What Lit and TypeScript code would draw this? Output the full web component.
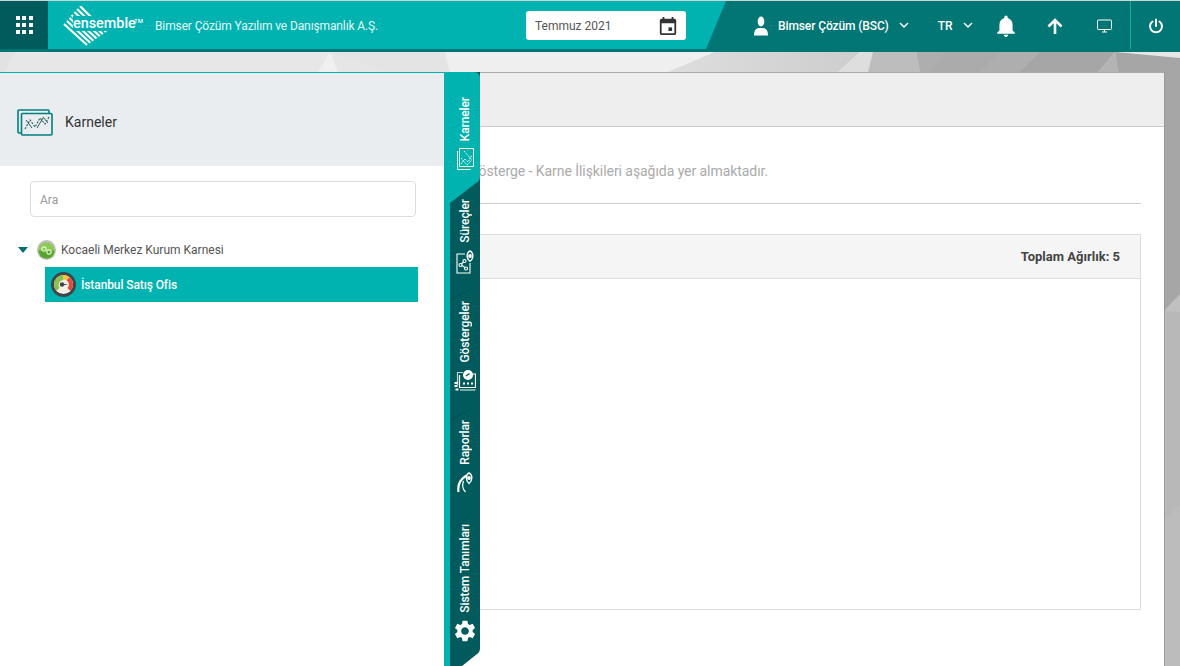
import { LitElement, html, css, svg } from "lit";
import { customElement } from "lit/decorators.js";

const GEAR = "M19.14 12.94c.04-.3.06-.61.06-.94 0-.32-.02-.64-.07-.94l2.03-1.58a.49.49 0 0 0 .12-.61l-1.92-3.32a.488.488 0 0 0-.59-.22l-2.39.96c-.5-.38-1.03-.7-1.62-.94l-.36-2.54a.484.484 0 0 0-.48-.41h-3.84c-.24 0-.43.17-.47.41l-.36 2.54c-.59.24-1.13.57-1.62.94l-2.39-.96c-.22-.08-.47 0-.59.22L2.74 8.87c-.12.21-.08.47.12.61l2.03 1.58c-.05.3-.09.63-.09.94s.02.64.07.94l-2.03 1.58a.49.49 0 0 0-.12.61l1.92 3.32c.12.22.37.29.59.22l2.39-.96c.5.38 1.03.7 1.62.94l.36 2.54c.05.24.24.41.48.41h3.84c.24 0 .44-.17.47-.41l.36-2.54c.59-.24 1.13-.56 1.62-.94l2.39.96c.22.08.47 0 .59-.22l1.92-3.32c.12-.22.07-.47-.12-.61l-2.01-1.58zM12 15.6c-1.98 0-3.6-1.62-3.6-3.6s1.62-3.6 3.6-3.6 3.6 1.62 3.6 3.6-1.62 3.6-3.6 3.6z";

const tabs = [
  {
    label: "Karneler",
    icon: html`<svg class="ti" width="17" height="22" viewBox="0 0 17 22" fill="none" stroke="#fff" stroke-width="1">
      <path d="M2.500 .5h14v18h-14z"/><path d="M.5 3v18.500h13"/>
      <path d="M4 16l4-5 3 3 4-7M4 10l6 7M7 3l8 9M10 17l5-5" stroke-width="1" stroke-dasharray="1.500 .8"/>
    </svg>`,
  },
  {
    label: "Süreçler",
    icon: html`<svg class="ti" width="19" height="24" viewBox="0 0 19 24" fill="none" stroke="#fff" stroke-width="1.100">
      <path d="M9 4H1v19h13V13"/>
      <circle cx="4.500" cy="15" r="1.500"/><circle cx="8.500" cy="11" r="1.500"/><circle cx="10" cy="18.500" r="1.500"/>
      <path d="M5.500 14l2-2M6 15.500l3 2"/>
      <path d="M14 .8c-3.800 2-3.800 7.700 0 10.400 3.800-2.700 3.800-8.400 0-10.400z" stroke-width="1.400"/>
      <circle cx="14" cy="6" r="1.900" fill="#fff" stroke="none"/>
    </svg>`,
  },
  {
    label: "Göstergeler",
    icon: html`<svg class="ti" width="22" height="21" viewBox="0 0 22 21" fill="none" stroke="#fff" stroke-width="1.200">
      <path d="M5.500 5v12.500h16V4H18"/><path d="M3.500 15V2.500H9" opacity=".75"/>
      <circle cx="14" cy="5" r="5" fill="#fff" stroke="none"/>
      <path d="M12 6l3.500-2.500" stroke="#015a5b" stroke-width="1.400"/>
      <path d="M9 13.500h2M13 13.500h2M17 13.500h2" stroke-width="1.800"/>
      <path d="M.5 13h3M.5 16h3M1.500 19.500h3" stroke-width="1.800"/>
      <path d="M6 20h15.500" opacity=".8"/>
    </svg>`,
  },
  {
    label: "Raporlar",
    icon: html`<svg class="ti" width="17" height="21" viewBox="0 0 17 21" fill="none" stroke="#fff">
      <path d="M1.500 20C.5 13 3.500 7 9.500 3.500" stroke-width="2.200"/>
      <path d="M6.500 9C5 13 5.500 17 8.500 20" stroke-width="1.200"/>
      <path d="M12 .8C8.500 3 8.500 8.500 12 11.500 15.800 8.500 15.800 3 12 .8z" stroke-width="1.400"/>
      <circle cx="12" cy="6" r="1.900" fill="#fff" stroke="none"/>
    </svg>`,
  },
  {
    label: "Sistem Tanımları",
    icon: html`<svg class="ti" width="22" height="22" viewBox="1.700 1.700 20.600 20.600" fill="#fff"><path d=${GEAR}/></svg>`,
  },
];

const polys: [string, string][] = [
  ["0,52 14,52 6,72 0,72", "#e2e2e2"],
  ["14,52 330,52 318,72 6,72", "#e7e7e7"],
  ["330,52 318,72 338,72", "#f0f0f0"],
  ["330,52 445,52 450,72 385,72", "#e4e4e4"],
  ["445,52 715,52 668,72 450,72", "#efefef"],
  ["715,52 860,52 838,72 668,72", "url(#g1)"],
  ["860,52 873,52 868,72 838,72", "#dedede"],
  ["873,52 916,52 920,72 868,72", "#bdbdbd"],
  ["916,52 1115,52 1098,72 920,72", "#aeaeae"],
  ["945,52 1000,52 980,72 930,72", "#ababab"],
  ["1040,52 1115,52 1098,72 1020,72", "#a6a6a6"],
  ["1115,52 1098,72 1118,72", "#b4b4b4"],
  ["1115,52 1180,58 1180,666 1164,666 1164,72 1118,72", "#a6a6a6"],
  ["1164,311 1180,294 1180,666 1164,666", "#b8b8b8"],
  ["1164,311 1180,294 1180,312", "#c0c0c0"],
  ["1164,520 1180,505 1180,666 1164,666", "#bcbcbc"],
];

@customElement("app-root")
export class AppRoot extends LitElement {
  static styles = css`
    :host { display: block; height: 100vh; }
    * { box-sizing: border-box; }
    .root { position: relative; height: 100vh; overflow: hidden; font-family: Roboto, "Liberation Sans", sans-serif; display: flex; flex-direction: column; background: #e6e6e6; }
    .bg { position: absolute; inset: 0; }

    header { position: relative; flex: none; height: 52px; border-top: 1px solid #c9d6d6; border-bottom: 3px solid #027675; background: #027675; display: flex; color: #fff; }
    .left { width: 726px; background: #00b3b1; clip-path: polygon(0 0, 100% 0, 706px 100%, 0 100%); display: flex; align-items: center; }
    .apps { width: 48px; height: 48px; background: #015a5b; display: grid; grid-template-columns: repeat(3, 4px); grid-auto-rows: 4px; gap: 3px 2.500px; place-content: center; }
    .apps i { background: #fff; display: block; }
    .logo { position: relative; width: 92px; height: 48px; margin-left: 15px; flex: none; }
    .logo svg { position: absolute; left: 0; top: 5px; }
    .logo b { position: absolute; left: 10px; top: 15px; height: 15px; background: #00b3b1; font: 500 14.400px/15px Roboto, sans-serif; }
    .logo sup { position: absolute; left: 71px; top: 17px; font: 500 6px/6px Roboto, sans-serif; }
    .company { margin-top: 2px; font-size: 12px; letter-spacing: -.12px; color: #e6f7f7; white-space: nowrap; width: 371px; }
    .date { margin-top: 1px; width: 160px; height: 29px; background: #fff; border-radius: 3px; color: #555; font-size: 12px; display: flex; align-items: center; justify-content: space-between; padding: 0 8px 0 9px; }
    .right { flex: 1; display: flex; align-items: center; padding-top: 1px; font-size: 12px; font-weight: 500; white-space: nowrap; }
    .user { margin-left: 28px; }
    .uname { margin-left: 10px; letter-spacing: -.1px; }
    .chev { margin-left: 10px; }
    .tr { margin-left: 29px; }
    .bell { margin-left: 22px; }
    .up { margin-left: 30px; }
    .mon { margin-left: 34px; }
    .sep { margin-left: 18px; width: 1px; height: 48px; margin-top: -1px; background: #0fa9a6; }
    .pow { margin-left: 17px; }

    .stage { position: relative; flex: 1; min-height: 0; padding: 20px 16px 0 0; }
    .panel { height: 640px; background: #fff; border-top: 1px solid #aaa; box-shadow: 1px 0 0 #999; }
    .phead { height: 54px; background: #eee; border-bottom: 1px solid #ccc; }
    .pbody { padding: 34px 23px 0 24px; }
    .note { margin: 0; padding: 0 0 22px 445px; font-size: 14px; letter-spacing: -.06px; line-height: 20px; color: #aaa; border-bottom: 1px solid #ccc; }
    .card { margin-top: 30px; height: 376px; border: 1px solid #ddd; }
    .chead { height: 44px; background: #f5f5f5; border-bottom: 1px solid #ddd; display: flex; align-items: center; justify-content: flex-end; padding-right: 20px; font-size: 13px; font-weight: 700; color: #444; }

    .drawer { position: absolute; left: 0; top: 72px; bottom: 0; width: 444px; background: #fff; border-top: 1px solid #00b3b1; }
    .dhead { height: 93px; background: #e9edf0; display: flex; align-items: center; padding: 5px 0 0 17px; gap: 12px; font-size: 14px; color: #333; }
    .search { display: block; margin: 15px 28px 0 30px; height: 36px; border: 1px solid #ddd; border-radius: 4px; padding: 0 9px; font: 12px/36px Roboto, sans-serif; color: #999; }
    .node { display: flex; align-items: center; height: 22px; margin-top: 22px; padding-left: 18px; font-size: 12px; color: #555; }
    .caret { width: 0; height: 0; border-left: 5px solid transparent; border-right: 5px solid transparent; border-top: 6px solid #00706f; }
    .node svg { margin: 0 5px 0 9px; }
    .sel { display: flex; align-items: center; height: 35px; margin: 6px 26px 0 45px; padding-left: 6px; gap: 5px; background: #00b3b1; color: #fff; font-size: 12px; font-weight: 500; letter-spacing: -.1px; }

    .rail { position: absolute; left: 444px; top: 72px; width: 36px; height: 594px; color: #fff; display: flex; flex-direction: column; padding-left: 6px; }
    .rail > svg { position: absolute; left: 0; top: 0; }
    .tab { position: relative; display: flex; flex-direction: column; align-items: center; gap: 7px; padding-top: 11px; }
    .tab span { writing-mode: vertical-rl; transform: rotate(180deg); font-size: 12px; letter-spacing: -.1px; font-weight: 500; line-height: 14px; white-space: nowrap; }
    .t0 { height: 118px; padding-top: 25px; }
    .t1 { height: 100px; padding-top: 9px; }
    .t2 { height: 119px; }
    .t3 { height: 104px; }
    .t4 { height: 153px; }
  `;

  render() {
    return html`<div class="root">
      <svg class="bg" width="1180" height="666" viewBox="0 0 1180 666">
        <defs><linearGradient id="g1" x1="0" x2="1" y1="0" y2="0"><stop offset="0" stop-color="#dedede"/><stop offset="1" stop-color="#cdcdcd"/></linearGradient></defs>
        ${polys.map(([p, c]) => svg`<polygon points=${p} fill=${c}/>`)}
      </svg>
      <header>
        <div class="left">
          <div class="apps">${Array.from({ length: 9 }, () => html`<i></i>`)}</div>
          <div class="logo">
            <svg width="46" height="40" viewBox="0 0 46 40" fill="none" stroke="#fff" stroke-width="2.200">
              <path d="M1 18L24 39M3.900 15L27.200 36.800M6.600 12L30.300 34.700M8.500 9L33.500 32.500M11.400 6L36.700 30.300M14.100 3L39.800 28.200M17 0L43 26"/>
            </svg>
            <b>ensemble</b><sup>TM</sup>
          </div>
          <div class="company">Bimser Çözüm Yazılım ve Danışmanlık A.Ş.</div>
          <div class="date">
            <span>Temmuz 2021</span>
            <svg width="20" height="20" viewBox="2 1 20 22" fill="#333"><path d="M19 4h-1V2h-2v2H8V2H6v2H5c-1.100 0-2 .9-2 2v14c0 1.100.9 2 2 2h14c1.100 0 2-.9 2-2V6c0-1.100-.9-2-2-2zm0 16H5V9h14v11z"/><rect x="12.500" y="13.500" width="4" height="4"/></svg>
          </div>
        </div>
        <div class="right">
          <svg class="user" width="14" height="20" viewBox="0 0 14 20" fill="#fff"><ellipse cx="7" cy="5.500" rx="3.300" ry="5"/><path d="M0 19.500c0-5 2-7 4.500-7.500h5c2.500.5 4.500 2.500 4.500 7.500z"/></svg>
          <span class="uname">Bimser Çözüm (BSC)</span>
          <svg class="chev" width="10" height="7" viewBox="0 0 10 7" fill="none" stroke="#fff" stroke-width="1.500"><path d="M1 1l4 4 4-4"/></svg>
          <span class="tr">TR</span>
          <svg class="chev" width="10" height="7" viewBox="0 0 10 7" fill="none" stroke="#fff" stroke-width="1.500"><path d="M1 1l4 4 4-4"/></svg>
          <svg class="bell" width="22" height="22" viewBox="2 2 20 20" fill="#fff"><path d="M12 22c1.100 0 2-.9 2-2h-4c0 1.100.9 2 2 2zm6-6v-5c0-3.070-1.630-5.640-4.500-6.320V4c0-.83-.67-1.500-1.500-1.500s-1.500.67-1.500 1.500v.68C7.640 5.360 6 7.920 6 11v5l-2 2v1h16v-1l-2-2z"/></svg>
          <svg class="up" width="16" height="16" viewBox="0 0 16 16" fill="none" stroke="#fff" stroke-width="2.600"><path d="M8 16V2M1.500 8.500L8 2l6.500 6.500"/></svg>
          <svg class="mon" width="15" height="14" viewBox="0 0 15 14" fill="none" stroke="#fff" stroke-width="1"><rect x=".5" y="1" width="14" height="9.500" rx="1"/><path d="M5 13h5M7.500 10.500V13"/></svg>
          <div class="sep"></div>
          <svg class="pow" width="16" height="16" viewBox="0 0 16 16" fill="none" stroke="#fff" stroke-width="2" stroke-linecap="round"><path d="M8 1.500V8M4.500 3.500a6 6 0 1 0 7 0"/></svg>
        </div>
      </header>
      <div class="stage">
        <div class="panel">
          <div class="phead"></div>
          <div class="pbody">
            <p class="note">Gösterge - Karne İlişkileri aşağıda yer almaktadır.</p>
            <div class="card"><div class="chead">Toplam Ağırlık: 5</div></div>
          </div>
        </div>
      </div>
      <aside class="drawer">
        <div class="dhead">
          <svg width="36" height="27" viewBox="0 0 36 27" fill="none" stroke="#00807e" stroke-width="1.600">
            <path d="M4 24H2a1 1 0 0 1-1-1V2a1 1 0 0 1 1-1h29a1 1 0 0 1 1 1v2"/>
            <rect x="4.500" y="4.500" width="30.500" height="21.500" rx="1"/>
            <path d="M8 20l5-9 5 7 5-9 5 6 4-7" stroke="#2b5d5c" stroke-width="1.100" stroke-dasharray="2 1.300"/>
            <path d="M9 11l6 8M20 19l6-10M26 8l5 6" stroke="#2b5d5c" stroke-width="1"/>
          </svg>
          <span>Karneler</span>
        </div>
        <div class="search">Ara</div>
        <div class="node">
          <i class="caret"></i>
          <svg width="19" height="20" viewBox="0 0 19 20"><ellipse cx="9.500" cy="10" rx="9.500" ry="10" fill="#bdbdbd"/><circle cx="9.500" cy="10.500" r="8" fill="#8ccb52"/><path d="M1.500 10.500a8 8 0 0 0 16 0z" fill="#55a52c"/><circle cx="7" cy="9" r="2.200" fill="none" stroke="#dff2cf" stroke-width="1.200"/><circle cx="12" cy="12" r="2.200" fill="none" stroke="#dff2cf" stroke-width="1.200"/></svg>
          <span>Kocaeli Merkez Kurum Karnesi</span>
        </div>
        <div class="sel">
          <svg width="25" height="25" viewBox="0 0 25 25"><circle cx="12.500" cy="12.500" r="12.500" fill="#3f4548"/><circle cx="12.500" cy="12.500" r="9.500" fill="#f4f1e4"/><path d="M12.500 3a9.500 9.500 0 0 0-9.500 9.500c0 2.500 1 4.800 2.500 6.500l3-3a5 5 0 0 1 4-8z" fill="#8cc152"/><path d="M12.500 3a9.500 9.500 0 0 1 6 2.200l-3 3a5 5 0 0 0-3-.7z" fill="#f3c63f"/><path d="M18.500 5.200a9.500 9.500 0 0 1 1 13.800l-3-3a5 5 0 0 0-1-7.800z" fill="#e2493b"/><circle cx="11" cy="12.500" r="2.200" fill="#3f4548"/><path d="M11 11.500l6 1-6 1z" fill="#3f4548"/></svg>
          <span>İstanbul Satış Ofis</span>
        </div>
      </aside>
      <nav class="rail">
        <svg width="36" height="594" viewBox="0 0 36 594">
          <path d="M6 0H36V576Q36 580 33 582L18 594H6z" fill="#015a5b"/>
          <path d="M0 0H30Q36 0 36 6V105Q36 109 32 111L6 131V594H0z" fill="#00b3b1"/>
          <g stroke="#014f50" stroke-width="1" fill="none">
            <path d="M6 228L29 216M6 348L29 336M6 460L29 440"/>
          </g>
        </svg>
        ${tabs.map((t, i) => html`<div class="tab t${i}"><span>${t.label}</span>${t.icon}</div>`)}
      </nav>
    </div>`;
  }
}
